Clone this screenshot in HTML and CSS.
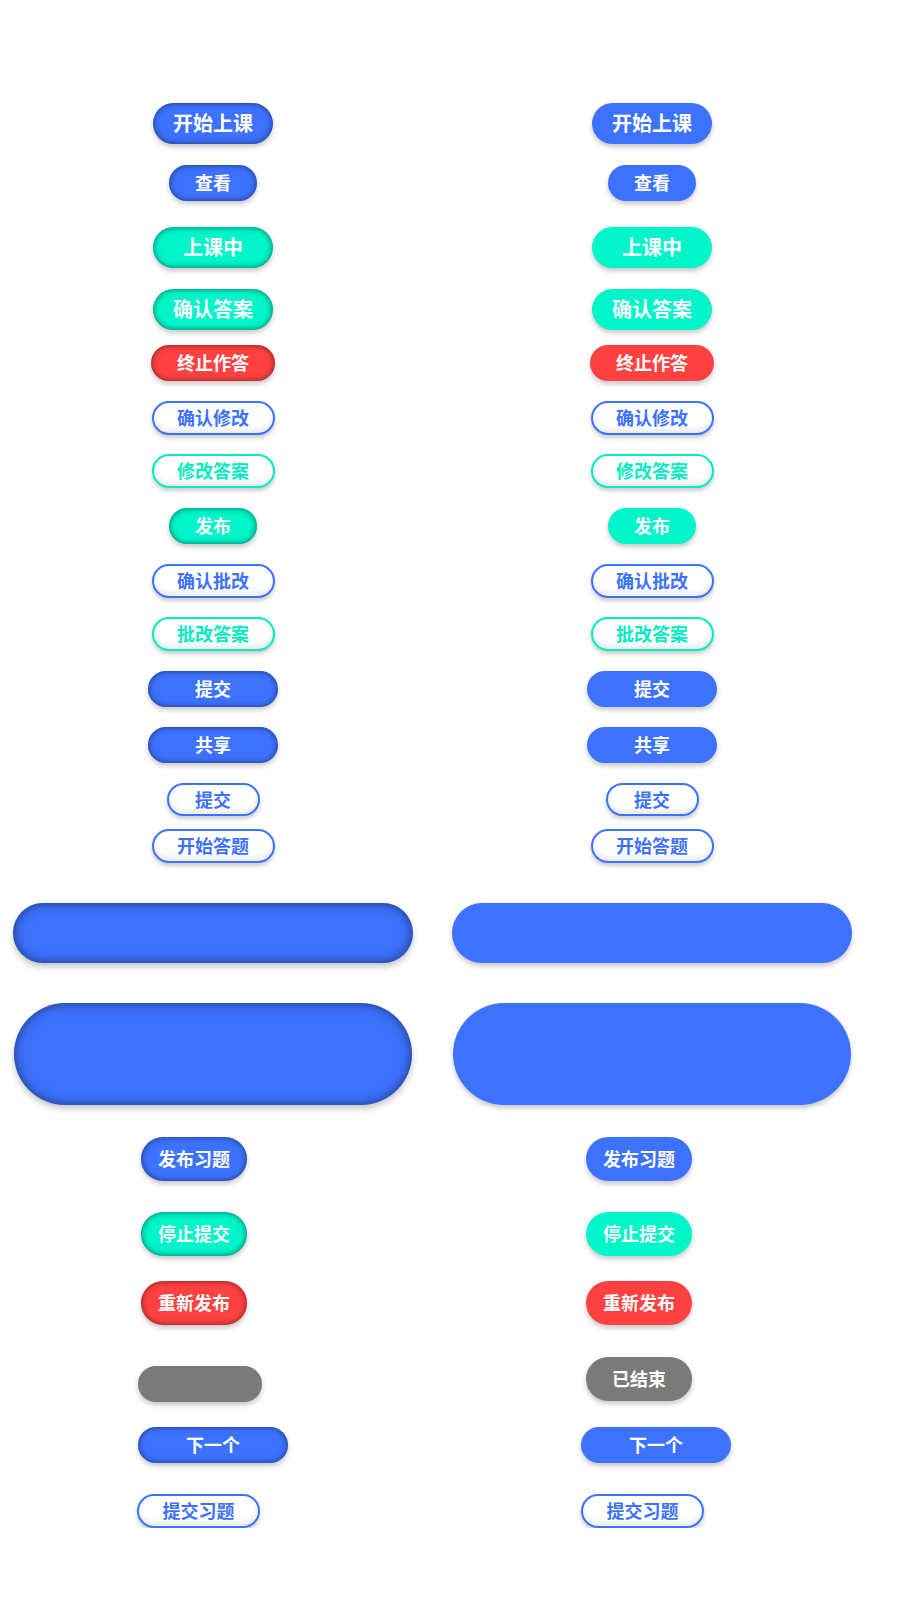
FILE: index.html
```html
<!DOCTYPE html>
<html lang="zh-CN">
<head>
    <meta charset="UTF-8">
    <title>按钮样式</title>
    <link rel="stylesheet" href="styles.css">
</head>
<body>

<div class="board">
    <!-- pressed state -->
    <div class="col col-a">
        <div class="btn lg blue press">开始上课</div>
        <div class="btn sm blue press">查看</div>
        <div class="btn lg green press">上课中</div>
        <div class="btn lg green press">确认答案</div>
        <div class="btn md red press">终止作答</div>
        <div class="btn ol line-blue">确认修改</div>
        <div class="btn ol line-green">修改答案</div>
        <div class="btn sm green press">发布</div>
        <div class="btn ol line-blue">确认批改</div>
        <div class="btn ol line-green">批改答案</div>
        <div class="btn wide blue press">提交</div>
        <div class="btn wide blue press">共享</div>
        <div class="btn xs line-blue">提交</div>
        <div class="btn ol line-blue">开始答题</div>
        <div class="btn bar blue press deep"></div>
        <div class="btn block blue press deep"></div>
        <div class="btn pill blue press low">发布习题</div>
        <div class="btn pill green press low">停止提交</div>
        <div class="btn pill red press low">重新发布</div>
        <div class="btn empty gray low"></div>
        <div class="btn next blue press low">下一个</div>
        <div class="btn ol line-blue low">提交习题</div>
    </div>

    <!-- normal state -->
    <div class="col col-b">
        <div class="btn lg blue">开始上课</div>
        <div class="btn sm blue">查看</div>
        <div class="btn lg green">上课中</div>
        <div class="btn lg green">确认答案</div>
        <div class="btn md red">终止作答</div>
        <div class="btn ol line-blue">确认修改</div>
        <div class="btn ol line-green">修改答案</div>
        <div class="btn sm green">发布</div>
        <div class="btn ol line-blue">确认批改</div>
        <div class="btn ol line-green">批改答案</div>
        <div class="btn wide blue">提交</div>
        <div class="btn wide blue">共享</div>
        <div class="btn xs line-blue">提交</div>
        <div class="btn ol line-blue">开始答题</div>
        <div class="btn bar blue"></div>
        <div class="btn block blue"></div>
        <div class="btn pill blue low">发布习题</div>
        <div class="btn pill green low">停止提交</div>
        <div class="btn pill red low">重新发布</div>
        <div class="btn pill gray low">已结束</div>
        <div class="btn next blue low">下一个</div>
        <div class="btn ol line-blue low">提交习题</div>
    </div>
</div>

</body>
</html>
```

FILE: styles.css
```css
body {
    margin: 0;
    background: #fff;
    font-family: "Noto Sans CJK SC", "Noto Sans", sans-serif;
}

.board {
    display: flex;
    gap: 39px;
    padding: 103px 0 0 13px;
}

.col {
    width: 400px;
    display: grid;
    grid-template-rows: 62px 62px 62px 56px 56px 53px 54px 56px 53px 54px 56px 56px 46px 74px 100px 134px 75px 69px 76px 70px 67px auto;
    justify-items: center;
    align-items: start;
}

.btn {
    display: flex;
    align-items: center;
    justify-content: center;
    box-sizing: border-box;
    padding-bottom: 2px;
    border-radius: 999px;
    color: #fff;
    font-weight: 700;
    font-size: 18px;
    line-height: 1;
    box-shadow: 0 3px 5px rgba(0, 0, 0, .22);
}

/* colours */
.blue { background: #3d72fe; }
.green { background: #00f5c9; }
.red { background: #ff4141; }
.gray { background: #7a7a7a; }

.line-blue {
    background: #fff;
    color: #3d72fe;
    border: 2px solid #3d72fe;
    box-shadow: inset 0 -4px 5px rgba(0, 0, 0, .08), 0 3px 4px rgba(0, 0, 0, .2);
}

.line-green {
    background: #fff;
    color: #00ecc2;
    border: 2px solid #00ecc2;
    box-shadow: inset 0 -4px 5px rgba(0, 0, 0, .08), 0 3px 4px rgba(0, 0, 0, .2);
}

.press {
    box-shadow: inset 0 0 6px rgba(0, 0, 0, .55), 0 3px 5px rgba(0, 0, 0, .22);
}

.press.deep {
    box-shadow: inset 0 0 12px rgba(0, 0, 0, .55), 0 4px 6px rgba(0, 0, 0, .22);
}

/* sizes */
.lg { width: 120px; height: 41px; font-size: 20px; }
.sm { width: 88px; height: 36px; }
.md { width: 124px; height: 36px; }
.ol { width: 123px; height: 34px; }
.wide { width: 130px; height: 36px; }
.xs { width: 93px; height: 33px; }
.bar { width: 400px; height: 60px; }
.block { width: 398px; height: 102px; }
.pill { width: 106px; height: 44px; }
.empty { width: 124px; height: 36px; }
.next { width: 150px; height: 36px; }

/* lower block sits left of centre */
.low { justify-self: start; }

.col-a .pill { margin-left: 128px; }
.col-a .empty { margin-left: 125px; margin-top: 9px; }
.col-a .next { margin-left: 125px; }
.col-a .ol.low { margin-left: 124px; }

.col-b .pill { margin-left: 134px; }
.col-b .next { margin-left: 129px; }
.col-b .ol.low { margin-left: 129px; }
```
